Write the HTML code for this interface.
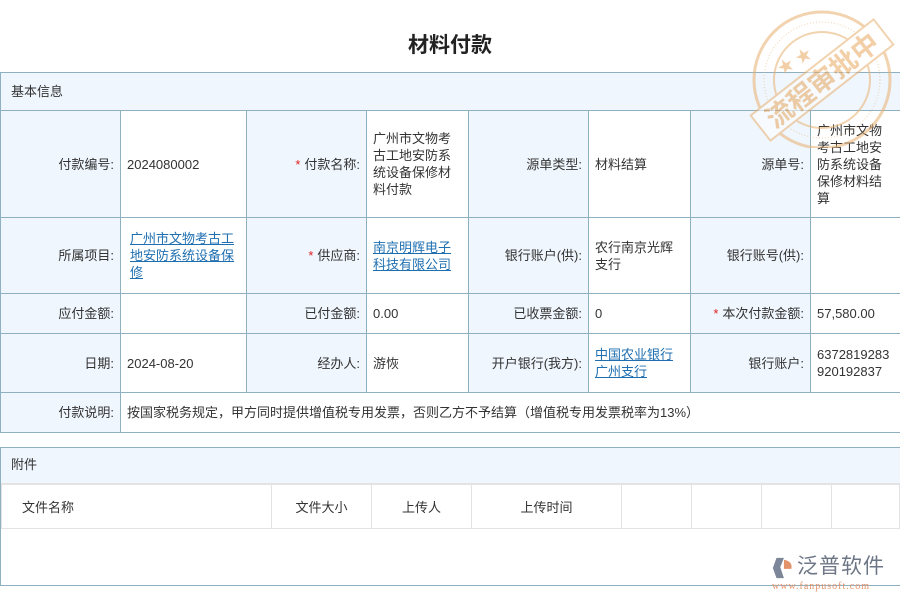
<!DOCTYPE html>
<html><head><meta charset="utf-8">
<style>
*{margin:0;padding:0;box-sizing:border-box}
body{width:900px;height:600px;background:#fff;position:relative;overflow:hidden;font-family:"Liberation Sans","Noto Sans CJK SC",sans-serif;font-size:13px;color:#333}
.a{position:absolute}
.t{left:0;width:900px;top:29px;text-align:center;font-size:21px;font-weight:bold;color:#222}
.c{position:absolute;border:1px solid #8fb0c0;display:flex;align-items:center;line-height:17px;padding:0 6px}
.l{background:#eff6fd;justify-content:flex-end;text-align:right}
.v{background:#fff}
.s{color:#e02020;margin-right:4px}
a{color:#1f6fb0;text-decoration:underline}
.g{position:absolute;border:1px solid #e3e3e3;display:flex;align-items:center;justify-content:center}
</style></head><body>
<div class="a t">材料付款</div>
<div class="c l" style="left:0;top:72px;width:901px;height:39px;justify-content:flex-start;padding-left:10px">基本信息</div>
<!-- row1 -->
<div class="c l" style="left:0;top:110px;width:121px;height:108px">付款编号:</div>
<div class="c v" style="left:120px;top:110px;width:127px;height:108px">2024080002</div>
<div class="c l" style="left:246px;top:110px;width:121px;height:108px"><span class="s">*</span>付款名称:</div>
<div class="c v" style="left:366px;top:110px;width:103px;height:108px">广州市文物考古工地安防系统设备保修材料付款</div>
<div class="c l" style="left:468px;top:110px;width:121px;height:108px">源单类型:</div>
<div class="c v" style="left:588px;top:110px;width:103px;height:108px">材料结算</div>
<div class="c l" style="left:690px;top:110px;width:121px;height:108px">源单号:</div>
<div class="c v" style="left:810px;top:110px;width:91px;height:108px">广州市文物考古工地安防系统设备保修材料结算</div>
<!-- row2 -->
<div class="c l" style="left:0;top:217px;width:121px;height:77px">所属项目:</div>
<div class="c v" style="left:120px;top:217px;width:127px;height:77px;padding-left:9px;padding-right:10px"><a>广州市文物考古工地安防系统设备保修</a></div>
<div class="c l" style="left:246px;top:217px;width:121px;height:77px"><span class="s">*</span>供应商:</div>
<div class="c v" style="left:366px;top:217px;width:103px;height:77px"><a>南京明辉电子科技有限公司</a></div>
<div class="c l" style="left:468px;top:217px;width:121px;height:77px">银行账户(供):</div>
<div class="c v" style="left:588px;top:217px;width:103px;height:77px">农行南京光辉支行</div>
<div class="c l" style="left:690px;top:217px;width:121px;height:77px">银行账号(供):</div>
<div class="c v" style="left:810px;top:217px;width:91px;height:77px"></div>
<!-- row3 -->
<div class="c l" style="left:0;top:293px;width:121px;height:41px">应付金额:</div>
<div class="c v" style="left:120px;top:293px;width:127px;height:41px"></div>
<div class="c l" style="left:246px;top:293px;width:121px;height:41px">已付金额:</div>
<div class="c v" style="left:366px;top:293px;width:103px;height:41px">0.00</div>
<div class="c l" style="left:468px;top:293px;width:121px;height:41px">已收票金额:</div>
<div class="c v" style="left:588px;top:293px;width:103px;height:41px">0</div>
<div class="c l" style="left:690px;top:293px;width:121px;height:41px"><span class="s">*</span>本次付款金额:</div>
<div class="c v" style="left:810px;top:293px;width:91px;height:41px">57,580.00</div>
<!-- row4 -->
<div class="c l" style="left:0;top:333px;width:121px;height:60px">日期:</div>
<div class="c v" style="left:120px;top:333px;width:127px;height:60px">2024-08-20</div>
<div class="c l" style="left:246px;top:333px;width:121px;height:60px">经办人:</div>
<div class="c v" style="left:366px;top:333px;width:103px;height:60px">游恢</div>
<div class="c l" style="left:468px;top:333px;width:121px;height:60px">开户银行(我方):</div>
<div class="c v" style="left:588px;top:333px;width:103px;height:60px"><a>中国农业银行广州支行</a></div>
<div class="c l" style="left:690px;top:333px;width:121px;height:60px">银行账户:</div>
<div class="c v" style="left:810px;top:333px;width:91px;height:60px;word-break:break-all">6372819283920192837</div>
<!-- row5 -->
<div class="c l" style="left:0;top:392px;width:121px;height:41px">付款说明:</div>
<div class="c v" style="left:120px;top:392px;width:781px;height:41px">按国家税务规定，甲方同时提供增值税专用发票，否则乙方不予结算（增值税专用发票税率为13%）</div>
<!-- attachments -->
<div class="a" style="left:0;top:447px;width:901px;height:139px;border:1px solid #8fb0c0"></div>
<div class="a" style="left:1px;top:448px;width:899px;height:36px;background:#eff6fd;border-bottom:1px solid #e3e3e3;padding-left:10px;line-height:34px">附件</div>
<div class="g" style="left:1px;top:484px;width:271px;height:45px;justify-content:flex-start;padding-left:20px">文件名称</div>
<div class="g" style="left:271px;top:484px;width:101px;height:45px">文件大小</div>
<div class="g" style="left:371px;top:484px;width:101px;height:45px">上传人</div>
<div class="g" style="left:471px;top:484px;width:151px;height:45px">上传时间</div>
<div class="g" style="left:621px;top:484px;width:71px;height:45px"></div>
<div class="g" style="left:691px;top:484px;width:71px;height:45px"></div>
<div class="g" style="left:761px;top:484px;width:71px;height:45px"></div>
<div class="g" style="left:831px;top:484px;width:69px;height:45px"></div>
<!-- stamp -->
<svg class="a" style="left:742px;top:8px" width="160" height="140" viewBox="0 0 160 140" opacity="0.55">
<g fill="none" stroke="#e8b070">
<circle cx="80" cy="72" r="68" stroke-width="3"/>
<circle cx="80" cy="72" r="58" stroke-width="1" stroke-dasharray="1 2"/>
<circle cx="80" cy="72" r="48" stroke-width="2"/>
</g>
<g transform="rotate(-38 80 72)">
<rect x="2" y="56" width="156" height="32" fill="#fff" stroke="#e8b070" stroke-width="2"/>
<text x="80" y="82" text-anchor="middle" font-size="27" font-weight="bold" fill="#e8a860" font-family="Liberation Sans,Noto Sans CJK SC,sans-serif">流程审批中</text>
</g>
<text x="35" y="60" font-size="16" fill="#e8a860" transform="rotate(-30 50 55)">★ ★</text>
</svg>
<!-- logo -->
<svg class="a" style="left:771px;top:556px" width="24" height="24" viewBox="0 0 26 26">
<path d="M6 2 L14 2 L10 12 L14 24 L6 24 L2 13 Z" fill="#7b8699"/>
<path d="M14 4 Q24 6 22 14 L14 14 Z" fill="#e3936c"/>
</svg>
<div class="a" style="left:797px;top:554px;font-size:21px;line-height:26px;color:#6d7686;letter-spacing:1px">泛普软件</div>
<div class="a" style="left:772px;top:581px;font-size:10px;line-height:12px;color:#e3936c;font-family:'Liberation Serif',serif;letter-spacing:1px">www.fanpusoft.com</div>
</body></html>
